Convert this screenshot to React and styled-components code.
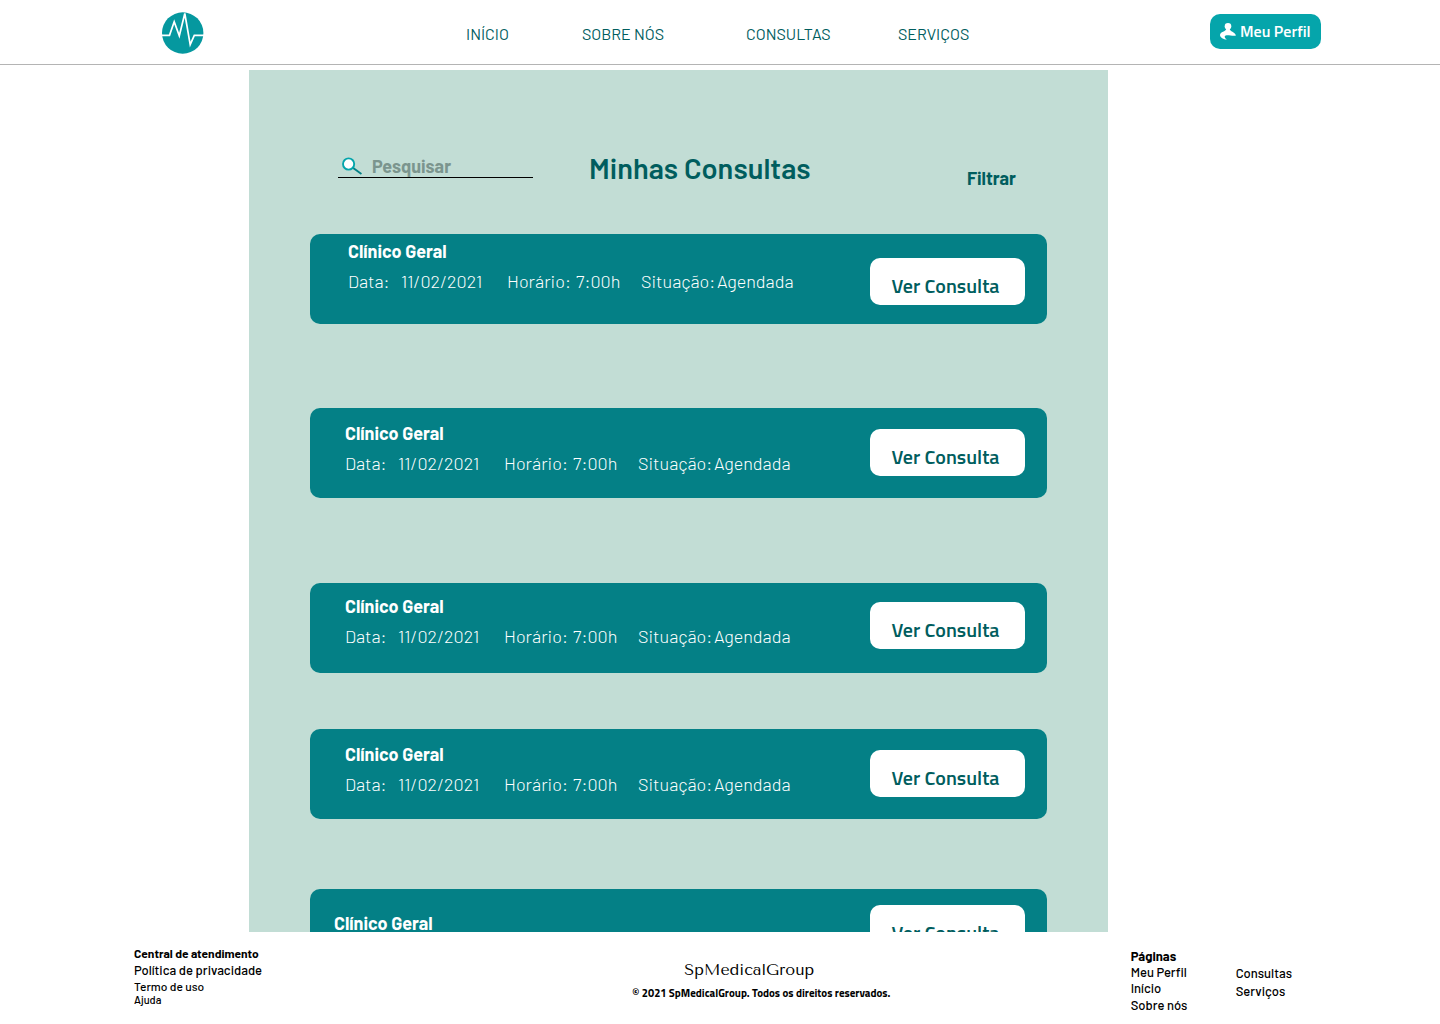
import React from "react";
import styled, { createGlobalStyle } from "styled-components";

const GlobalStyle = createGlobalStyle`
  * { box-sizing: border-box; }
  body {
    margin: 0;
    background: #fff;
    font-family: Barlow, Roboto, "Liberation Sans", sans-serif;
  }
  h1, h2, h3, p, ul, dl, dd { margin: 0; padding: 0; }
  ul { list-style: none; }
  a { color: inherit; text-decoration: none; }
  button { font-family: inherit; border: 0; cursor: pointer; }
`;

const Shell = styled.div`
  display: flex;
  flex-direction: column;
  height: 100vh;
`;

const Header = styled.header`
  display: grid;
  grid-template-columns: 304fr 744fr auto;
  align-items: center;
  flex: none;
  height: 65px;
  padding: 0 119px 0 162px;
  border-bottom: 1px solid #b4b4b4;
`;

const LogoLink = styled.a`
  display: block;
  width: 42px;
  height: 42px;
  margin-top: 2px;
`;

const Nav = styled.nav`
  display: grid;
  grid-template-columns: 116px 164px 152px auto;
  justify-content: start;
  padding-top: 4px;
  color: #005d5e;
  font-size: 16px;
  line-height: 20px;
`;

const ProfileButton = styled.button`
  display: flex;
  align-items: center;
  gap: 4px;
  width: 111px;
  height: 35px;
  margin-bottom: 2px;
  padding: 0 0 0 10px;
  border-radius: 10px;
  background: #05a5ab;
  color: #fff;
  font-family: "Titillium Web", Barlow, Roboto, sans-serif;
  font-size: 16px;
  font-weight: 600;
  white-space: nowrap;
`;

const Main = styled.main`
  display: grid;
  grid-template-columns: 249fr 859fr 332fr;
  flex: 1;
  min-height: 0;
  padding-top: 5px;
`;

const Panel = styled.section`
  grid-column: 2;
  min-height: 0;
  padding: 80px 61px 0;
  overflow-y: auto;
  scrollbar-width: none;
  background: #c2ddd5;
`;

const Toolbar = styled.div`
  display: flex;
  align-items: flex-end;
  height: 40px;
  margin-bottom: 44px;
  padding: 0 31px 0 28px;
  color: #005d5e;
`;

const SearchBox = styled.label`
  display: flex;
  align-items: center;
  gap: 10px;
  width: 195px;
  height: 24px;
  margin: 0 56px 12px 0;
  padding-left: 4px;
  border-bottom: 1px solid #000;
`;

const SearchInput = styled.input`
  flex: 1;
  min-width: 0;
  padding: 0;
  border: 0;
  outline: 0;
  background: transparent;
  color: #005d5e;
  font: 700 18px/22px Barlow, Roboto, sans-serif;
  &::placeholder { color: #7b958e; opacity: 1; }
`;

const Title = styled.h1`
  font-size: 29px;
  font-weight: 600;
  line-height: 44px;
  white-space: nowrap;
`;

const FilterButton = styled.button`
  margin-left: auto;
  padding: 0;
  background: none;
  color: #005d5e;
  font-size: 18px;
  font-weight: 700;
  line-height: 24px;
`;

const Card = styled.li`
  display: flex;
  justify-content: space-between;
  align-items: flex-start;
  height: 90px;
  margin-bottom: ${(p) => p.$after}px;
  padding: 0 22px 0 ${(p) => p.$indent}px;
  border-radius: 10px;
  background: #048086;
  color: #fff;
`;

const Info = styled.div`
  padding-top: ${(p) => p.$top}px;
`;

const Specialty = styled.h2`
  font-size: 18px;
  font-weight: 700;
  line-height: 30px;
`;

const Details = styled.dl`
  display: grid;
  grid-template-columns: 53px 106px 69px 65px 76px auto;
  font-size: 18px;
  font-weight: 300;
  line-height: 30px;
  white-space: nowrap;
`;

const ViewButton = styled.button`
  width: 155px;
  height: 47px;
  margin-top: ${(p) => p.$top}px;
  padding: 8px 4px 0 0;
  border-radius: 10px;
  background: #fff;
  color: #005d5e;
  font-family: "Titillium Web", Barlow, Roboto, sans-serif;
  font-size: 20px;
  font-weight: 600;
`;

const Footer = styled.footer`
  display: grid;
  grid-template-columns: 498fr 498fr 105px auto;
  flex: none;
  height: 92px;
  padding: 13px 148px 0 134px;
  color: #000;
  font-size: 12px;
  font-weight: 500;
`;

const FooterList = styled.ul`
  padding-top: ${(p) => p.$top || 0}px;
`;

const FooterItem = styled.li`
  font-size: ${(p) => p.$size || 12}px;
  font-weight: ${(p) => (p.$bold ? 700 : 500)};
  line-height: ${(p) => p.$line || 16}px;
`;

const Brand = styled.p`
  padding: 15px 0 0 52px;
  font-family: "Tenor Sans", Lato, sans-serif;
  font-size: 16px;
  font-weight: 400;
  line-height: 20px;
`;

const Copyright = styled.p`
  padding-top: 5px;
  font-family: "Titillium Web", Barlow, Roboto, sans-serif;
  font-size: 11px;
  font-weight: 700;
  line-height: 16px;
`;

const appointments = [
  { indent: 38, textTop: 2, buttonTop: 24, after: 84 },
  { indent: 35, textTop: 10, buttonTop: 21, after: 85 },
  { indent: 35, textTop: 8, buttonTop: 19, after: 56 },
  { indent: 35, textTop: 10, buttonTop: 21, after: 70 },
  { indent: 24, textTop: 19, buttonTop: 16, after: 60 },
];

function Logo() {
  return (
    <svg width="42" height="42" viewBox="0 0 42 42" aria-hidden="true">
      <circle cx="20.7" cy="21" r="20.7" fill="#05989f" />
      <path d="M0 23.4H7.5L12.2 9.8L17.3 23.8L22.8 1.5L28.2 32.6L32.3 23.4H42" fill="none" stroke="#fff" strokeWidth="1.7" />
    </svg>
  );
}

function PersonIcon() {
  return (
    <svg width="16" height="17" viewBox="0 0 16 17" aria-hidden="true" fill="#fff">
      <circle cx="8" cy="3.3" r="3.3" />
      <path d="M6.3 5.5H9.7C9.9 9 14.8 8.3 16 12.6C12.5 13.4 8.5 11.6 5.8 12.4C3.7 13.1 5 15.4 7.2 16.6C3.5 16.5 0 14.5 0 12C0 8.6 6 9 6.3 5.5Z" />
    </svg>
  );
}

function SearchIcon() {
  return (
    <svg width="20" height="18" viewBox="0 0 20 18" aria-hidden="true">
      <path d="M10.5 10.5L19.5 17" stroke="#048086" strokeWidth="2" />
      <circle cx="6.6" cy="7" r="5.6" fill="#fff" stroke="#05a5ab" strokeWidth="1.9" />
    </svg>
  );
}

function AppointmentCard({ item }) {
  return (
    <Card $indent={item.indent} $after={item.after}>
      <Info $top={item.textTop}>
        <Specialty>Clínico Geral</Specialty>
        <Details>
          <dt>Data:</dt>
          <dd>11/02/2021</dd>
          <dt>Horário:</dt>
          <dd>7:00h</dd>
          <dt>Situação:</dt>
          <dd>Agendada</dd>
        </Details>
      </Info>
      <ViewButton $top={item.buttonTop}>Ver Consulta</ViewButton>
    </Card>
  );
}

export default function App() {
  return (
    <Shell>
      <GlobalStyle />
      <Header>
        <LogoLink href="#inicio" aria-label="SpMedicalGroup"><Logo /></LogoLink>
        <Nav>
          <a href="#inicio">INÍCIO</a>
          <a href="#sobre">SOBRE NÓS</a>
          <a href="#consultas">CONSULTAS</a>
          <a href="#servicos">SERVIÇOS</a>
        </Nav>
        <ProfileButton><PersonIcon />Meu Perfil</ProfileButton>
      </Header>
      <Main>
        <Panel>
          <Toolbar>
            <SearchBox>
              <SearchIcon />
              <SearchInput type="search" placeholder="Pesquisar" aria-label="Pesquisar" />
            </SearchBox>
            <Title>Minhas Consultas</Title>
            <FilterButton>Filtrar</FilterButton>
          </Toolbar>
          <ul>
            {appointments.map((item, index) => (
              <AppointmentCard key={index} item={item} />
            ))}
          </ul>
        </Panel>
      </Main>
      <Footer>
        <FooterList>
          <FooterItem $bold>Central de atendimento</FooterItem>
          <FooterItem $size={13} $line={18}><a href="#privacidade">Política de privacidade</a></FooterItem>
          <FooterItem $line={14}><a href="#termo">Termo de uso</a></FooterItem>
          <FooterItem $size={11} $line={14}><a href="#ajuda">Ajuda</a></FooterItem>
        </FooterList>
        <div>
          <Brand>SpMedicalGroup</Brand>
          <Copyright>© 2021 SpMedicalGroup. Todos os direitos reservados.</Copyright>
        </div>
        <FooterList $top={3}>
          <FooterItem $size={13} $bold>Páginas</FooterItem>
          <FooterItem $size={13}><a href="#perfil">Meu Perfil</a></FooterItem>
          <FooterItem $size={13}><a href="#inicio">Início</a></FooterItem>
          <FooterItem $size={13} $line={18}><a href="#sobre">Sobre nós</a></FooterItem>
        </FooterList>
        <FooterList $top={19}>
          <FooterItem $size={13} $line={18}><a href="#consultas">Consultas</a></FooterItem>
          <FooterItem $size={13} $line={18}><a href="#servicos">Serviços</a></FooterItem>
        </FooterList>
      </Footer>
    </Shell>
  );
}
